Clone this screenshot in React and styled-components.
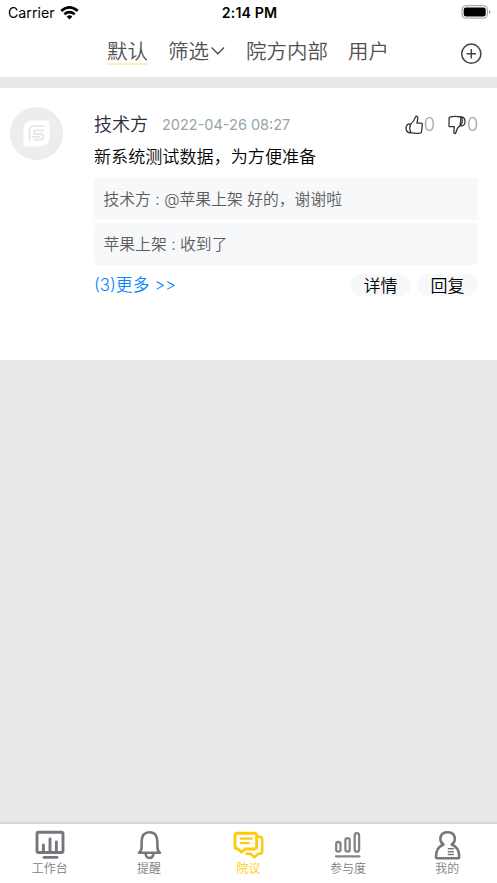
import React, { Component } from 'react';
import styled, { createGlobalStyle } from 'styled-components';

const GlobalStyle = createGlobalStyle`
  * {
    box-sizing: border-box;
  }

  body {
    margin: 0;
    background: #e8e8e8;
    font-family: Inter, "Noto Sans CJK SC", sans-serif;
  }
`;

const Container = styled.div`
  width: 100%;
  height: 100vh;
  display: flex;
  flex-direction: column;
  background: #e8e8e8;
  overflow: hidden;
  white-space: nowrap;
`;

//Status bar
const StatusBar = styled.div`
  height: 26px;
  flex: none;
  display: grid;
  grid-template-columns: 1fr auto 1fr;
  align-items: center;
  padding: 0 6px 0 8px;
  background: #fff;
  color: #000;
  font-size: 14.2px;
  line-height: 26px;
`;

const Carrier = styled.div`
  display: flex;
  align-items: center;
  gap: 5px;
`;

const Clock = styled.div`
  font-weight: 600;
  letter-spacing: 0.1px;
`;

const Battery = styled.svg`
  justify-self: end;
  display: block;
  margin-top: -2px;
`;

//Header
const Header = styled.header`
  height: 51px;
  flex: none;
  display: flex;
  align-items: flex-start;
  padding: 10px 15px 0 107px;
  background: #fff;
  color: #505050;
`;

const Filters = styled.nav`
  flex: 1;
  display: flex;
  gap: 20px;
`;

const Filter = styled.div`
  display: flex;
  height: 29px;
  font-size: 20.5px;
  font-weight: 350;
  line-height: 31px;
  border-bottom: 2px solid ${props => props.$active ? '#ffefb5' : 'transparent'};
`;

const Chevron = styled.svg`
  margin: 10px 0 0 1px;
`;

const AddIcon = styled.svg`
  margin-top: 7px;
`;

//Post
const Post = styled.article`
  height: 272px;
  flex: none;
  display: flex;
  margin-top: 11px;
  padding: 19px 19px 0 10px;
  background: #fff;
`;

const Avatar = styled.div`
  width: 53px;
  height: 53px;
  flex: none;
  display: flex;
  align-items: center;
  justify-content: center;
  margin-right: 31px;
  border-radius: 50%;
  background: #ededed;
`;

const Content = styled.div`
  flex: 1;
  font-weight: 350;
`;

const PostHead = styled.div`
  height: 34px;
  display: flex;
  line-height: 34px;
`;

const Author = styled.div`
  width: 68px;
  padding-top: 1px;
  color: #2b2b40;
  font-size: 18px;
`;

const Time = styled.div`
  flex: 1;
  padding-top: 1px;
  color: #97a5ab;
  font-size: 14.5px;
  font-weight: 400;
`;

const Vote = styled.div`
  display: flex;
  align-items: center;
  margin-left: 13px;
  padding-top: 1px;
  color: #97a5ab;
  font-size: 18px;
`;

const Message = styled.p`
  margin: 0;
  height: 37px;
  color: #000;
  font-size: 17.1px;
  line-height: 32px;
`;

const Reply = styled.div`
  height: 42px;
  margin-bottom: 3px;
  padding-left: 9.5px;
  border-radius: 4px;
  background: #f7f8fa;
  color: #5c5c5c;
  font-size: 15.8px;
  line-height: 43px;
`;

const Actions = styled.div`
  height: 34px;
  display: flex;
  align-items: center;
  gap: 6px;
`;

const More = styled.a`
  flex: 1;
  color: #0a84ff;
  font-size: 16.8px;
  line-height: 22px;
  margin-top: -1px;
`;

const Button = styled.button`
  width: 61px;
  height: 22px;
  padding: 1px 0 0;
  border: 0;
  border-radius: 11px;
  background: #f7f8fa;
  color: #000;
  font-family: inherit;
  font-size: 17px;
  font-weight: 350;
  line-height: 22px;
`;

//Tab bar
const TabBar = styled.nav`
  height: 61px;
  flex: none;
  display: flex;
  margin-top: auto;
  border-top: 2px solid #d5d5d5;
  background: #fff;
`;

const Tab = styled.div`
  flex: 1;
  display: flex;
  flex-direction: column;
  align-items: center;
  padding-top: 5px;
  color: ${props => props.$active ? '#fccb0a' : '#74787d'};
`;

const TabLabel = styled.span`
  color: ${props => props.$active ? '#fccb0a' : '#808080'};
  font-size: 12px;
  font-weight: 350;
  line-height: 18px;
`;

const TabIcon = styled.svg`
  display: block;
  flex: none;
  fill: none;
  stroke: currentColor;
  stroke-width: 2.9;
  stroke-linecap: round;
  stroke-linejoin: round;
`;

const ThumbIcon = ({ down }) => (
  <svg width="19" height="20" viewBox="0 0 19 20" fill="none" stroke="#333" strokeWidth="1.3" strokeLinejoin="round">
    {down ? (
      <>
        <path d="M1.2 2.3Q6 .7 13 2L12.2 10.6Q8.5 13.4 7.8 17.8Q7.6 18.7 6.7 18.5Q5.5 18.2 5.8 16.5L6.3 11.7H1.8Q.9 11.7 1 10.5Z" />
        <path d="M13 2Q14.5 2.8 14.3 6T12.2 10.6Q14 11.5 15.8 10Q17.7 7.8 16.8 4.7Q15.8 1.7 13 2Z" />
      </>
    ) : (
      <>
        <path d="M5.4 9.5Q9.2 6.2 10.6 1.9Q11 1 12 1.4Q13.1 1.9 12.8 3.4L12 8.2H16.3Q17.4 8.2 17.3 9.5L16.5 17Q16.3 18.2 15 18.2Q9.5 18.8 6 17.7Q3.9 13.5 5.4 9.5Z" />
        <path d="M5.4 9.5Q3.8 8.3 2.3 9.7Q.6 11.6 1.2 14.5Q2 18.3 6 17.7" />
      </>
    )}
  </svg>
);

const tabs = [
  {
    name: '工作台',
    icon: (
      <>
        <rect x="3" y="3.3" width="26" height="20.2" rx="1.5" />
        <path d="M9.4 22v-6M16 22V10M22.4 22v-9M10 28.4h13" />
      </>
    ),
  },
  {
    name: '提醒',
    icon: (
      <path d="M5 23.8h21Q23.4 22 23.4 18v-5Q23.4 3.3 15.5 3.3T7.6 13v5Q7.6 22 5 23.8ZM11.6 24.5Q12 29 15.5 29T19.5 24.5" strokeWidth="2.6" />
    ),
  },
  {
    name: '院议',
    icon: (
      <>
        <path d="M4.5 4.2h16.7q2.4 0 2.4 2.4v11q0 2.4-2.4 2.4H12.2l-3.5 3.2L5.2 20H4.5Q2 20 2 17.6v-11Q2 4.2 4.5 4.2Z" />
        <path d="M7.7 9.6h11M7.7 14.1h8" strokeWidth="2.2" />
        <path d="M25 7.6Q29.2 7.6 29.2 10.5v11.7q0 2.6-3 2.6H25l-3.6 3.6-3.6-3.6H13.5" strokeWidth="2.5" />
      </>
    ),
  },
  {
    name: '参与度',
    icon: (
      <g stroke="#858585" strokeWidth="2.3">
        <rect x="4.2" y="13" width="4.3" height="9.6" rx="2.1" />
        <rect x="13.4" y="9.2" width="4.3" height="13.4" rx="2.1" />
        <rect x="22.7" y="4.2" width="4.4" height="18.4" rx="2.2" />
        <path d="M4 27.3h23.4" />
      </g>
    ),
  },
  {
    name: '我的',
    icon: (
      <>
        <path d="M11.5 15.5C6.5 12 7.3 3.2 15.6 3.2S24.7 12 19.7 15.5Q27.5 18.3 27.2 28.2Q27.2 29.2 26 29.2H5.2Q4 29.2 4 28.2Q3.7 18.3 11.5 15.5Z" strokeWidth="2.6" />
        <path d="M16.3 19.7h5M16.3 22.7h5M16.3 25.5h5" strokeWidth="1.4" />
      </>
    ),
  },
];

const replies = [
  '技术方 : @苹果上架 好的，谢谢啦',
  '苹果上架 : 收到了',
];

class App extends Component {

  state = {
    filter: '默认',
    tab: '院议'
  }

  renderFilter = (name) => (
    <Filter key={name} $active={name === this.state.filter}>
      {name}
      {name === '筛选' && (
        <Chevron width="16" height="10" viewBox="0 0 16 10" fill="none" stroke="#505050" strokeWidth="1.4">
          <path d="M1.5 1.5l6.3 6.3L14.1 1.5" />
        </Chevron>
      )}
    </Filter>
  )

  renderTab = (item) => {
    const active = item.name === this.state.tab;
    return (
      <Tab key={item.name} $active={active}>
        <TabIcon width="31" height="31" viewBox="0 0 31 31">{item.icon}</TabIcon>
        <TabLabel $active={active}>{item.name}</TabLabel>
      </Tab>
    )
  }

  render() {
    return (
      <Container lang="zh-CN">
        <GlobalStyle />
        <StatusBar>
          <Carrier>
            Carrier
            <svg width="19" height="14" viewBox="0 0 19 14" fill="none" stroke="#000" strokeWidth="2.7">
              <path d="M1.2 4.9Q9.5-2.2 17.8 4.9" />
              <path d="M4.3 8.2Q9.5 4 14.7 8.2" />
              <path d="M9.5 13.4L6.6 10.5Q9.5 8.2 12.4 10.5Z" fill="#000" stroke="none" />
            </svg>
          </Carrier>
          <Clock>2:14 PM</Clock>
          <Battery width="30" height="14" viewBox="0 0 30 14">
            <rect x="1" y=".7" width="25.4" height="12.4" rx="3.6" fill="none" stroke="#999" />
            <rect x="2.7" y="2.4" width="22" height="9" rx="2.1" fill="#000" />
            <path d="M28 4.7Q29.5 5.5 29.5 6.9T28 9.1Z" fill="#999" />
          </Battery>
        </StatusBar>
        <Header>
          <Filters>
            {['默认', '筛选', '院方内部', '用户'].map(this.renderFilter)}
          </Filters>
          <AddIcon width="22" height="22" viewBox="0 0 22 22" fill="none" stroke="#444" strokeWidth="1.5">
            <circle cx="11.3" cy="10.7" r="9.6" />
            <path d="M6.6 10.7H16M11.3 6v9.4" />
          </AddIcon>
        </Header>
        <Post>
          <Avatar>
            <svg width="27" height="27" viewBox="0 0 27 27" fill="none">
              <path d="M10 .5H24Q26.5.5 26.5 3V16Q26.5 26.5 16 26.5H3Q.5 26.5.5 24V10Q.5.5 10 .5Z" fill="#fff" />
              <path d="M21.5 6H10.5Q6.5 6 6.5 10V21.5M21 10.3H13Q10.8 10.3 10.8 12.3T13 14.2H18Q20.5 14.2 20.5 16.8T18 19.7H10M8.5 16.8H17" stroke="#e5e5e5" strokeWidth="1.7" />
            </svg>
          </Avatar>
          <Content>
            <PostHead>
              <Author>技术方</Author>
              <Time>2022-04-26 08:27</Time>
              <Vote><ThumbIcon />0</Vote>
              <Vote><ThumbIcon down />0</Vote>
            </PostHead>
            <Message>新系统测试数据，为方便准备</Message>
            {replies.map(text => <Reply key={text}>{text}</Reply>)}
            <Actions>
              <More>(3)更多 &gt;&gt;</More>
              <Button>详情</Button>
              <Button>回复</Button>
            </Actions>
          </Content>
        </Post>
        <TabBar>
          {tabs.map(this.renderTab)}
        </TabBar>
      </Container>
    )
  }
}

export default App;
